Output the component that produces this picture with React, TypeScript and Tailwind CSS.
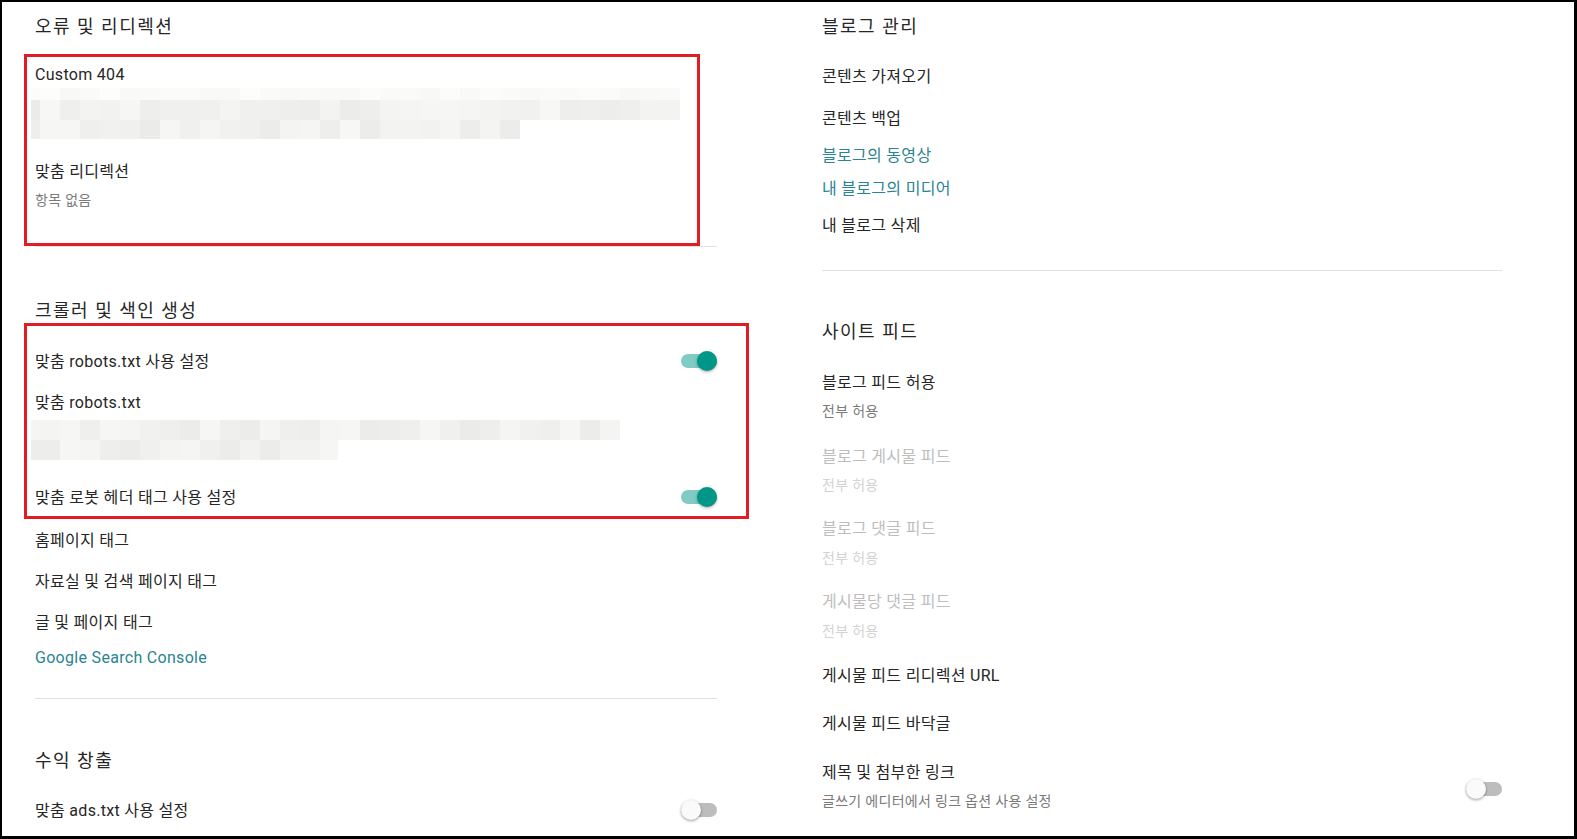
import React from "react";

type MRow = { y: number; h: number; end: number; light?: boolean };

function Mosaic({ rows, seed, height }: { rows: MRow[]; seed: number; height: number }) {
  let s = seed;
  const rnd = () => {
    s = (s * 9301 + 49297) % 233280;
    return s / 233280;
  };
  const width = Math.max(...rows.map((r) => r.end));
  const rects: React.ReactElement[] = [];
  rows.forEach((r, ri) => {
    let x = 0;
    let ci = 0;
    while (x < r.end) {
      const w = ci === 0 ? 9 : Math.min(20, r.end - x);
      const v = r.light ? Math.round(248 + rnd() * 5) : Math.round(235 + rnd() * 12);
      rects.push(
        <rect key={`${ri}-${ci}`} x={x} y={r.y} width={w} height={r.h} fill={`rgb(${v},${v},${v - 1})`} />
      );
      x += w;
      ci++;
    }
  });
  return (
    <svg width={width} height={height} className="block -ml-[4px]" viewBox={`0 0 ${width} ${height}`}>
      {rects}
    </svg>
  );
}

function Toggle({ on }: { on?: boolean }) {
  return (
    <div className="relative w-[36px] h-[20px] shrink-0">
      <div
        className={
          on
            ? "absolute left-0 right-0 top-[3px] h-[14px] rounded-full bg-[#80cbc4]"
            : "absolute left-0 right-0 top-[3px] h-[14px] rounded-full bg-[#bdbdbd]"
        }
      />
      <div
        className={
          on
            ? "absolute right-0 top-0 w-[20px] h-[20px] rounded-full bg-[#009688] shadow-[0_1px_3px_rgba(0,0,0,0.35)]"
            : "absolute left-0 top-0 w-[20px] h-[20px] rounded-full bg-[#fafafa] shadow-[0_1px_3px_rgba(0,0,0,0.4)]"
        }
      />
    </div>
  );
}

const H = "h-[36px] flex items-center text-[18px] tracking-[1.5px] text-[#262626]";
const T = "h-[24px] pt-[2px] flex items-center text-[16px] tracking-[0.3px] text-[#262626]";
const L = "h-[24px] pt-[2px] flex items-center text-[16px] tracking-[0.3px] text-[#2a8491]";
const S = "h-[20px] pt-[2px] flex items-center text-[14px] tracking-[0.3px] text-[#7a7a7a]";
const DT = "h-[24px] pt-[2px] flex items-center text-[16px] tracking-[0.3px] text-[#bdbdbd]";
const DS = "h-[20px] pt-[2px] flex items-center text-[14px] tracking-[0.3px] text-[#d3d3d3]";
const TR = "h-[32px] flex items-center justify-between text-[16px] tracking-[0.3px] text-[#262626]";

export default function App() {
  return (
    <div className="relative w-[1577px] h-[839px] overflow-hidden bg-white border-l-2 border-t-2 border-r-[3px] border-b-[3px] border-black font-[Roboto,'Noto_Sans_CJK_KR',sans-serif]">
      <div className="flex pl-[33px] pt-[6px]">
        {/* Left column */}
        <div className="w-[682px] flex flex-col">
          <h2 className={H}>오류 및 리디렉션</h2>
          <div className={`mt-[18px] ${T}`}>Custom 404</div>
          <div className="mt-[2px] h-[51px]">
            <Mosaic
              seed={17}
              height={51}
              rows={[
                { y: 0, h: 12, end: 649, light: true },
                { y: 12, h: 20, end: 649 },
                { y: 32, h: 19, end: 489 },
              ]}
            />
          </div>
          <div className={`mt-[20px] ${T}`}>맞춤 리디렉션</div>
          <div className={`mt-[6px] ${S}`}>항목 없음</div>
          <div className="mt-[37px] h-px bg-[#e0e0e0]" />
          <h2 className={`mt-[45px] ${H}`}>크롤러 및 색인 생성</h2>
          <div className={`mt-[17px] ${TR}`}>
            <span className="pt-[2px]">맞춤 robots.txt 사용 설정</span>
            <Toggle on />
          </div>
          <div className={`mt-[13px] ${T}`}>맞춤 robots.txt</div>
          <div className="mt-[6px] h-[41px]">
            <Mosaic
              seed={91}
              height={41}
              rows={[
                { y: 0, h: 20, end: 589 },
                { y: 20, h: 20, end: 307 },
              ]}
            />
          </div>
          <div className={`mt-[20px] ${TR}`}>
            <span className="pt-[2px]">맞춤 로봇 헤더 태그 사용 설정</span>
            <Toggle on />
          </div>
          <div className={`mt-[15px] ${T}`}>홈페이지 태그</div>
          <div className={`mt-[17px] ${T}`}>자료실 및 검색 페이지 태그</div>
          <div className={`mt-[17px] ${T}`}>글 및 페이지 태그</div>
          <div className={`mt-[11px] ${L}`}>Google Search Console</div>
          <div className="mt-[29px] h-px bg-[#e0e0e0]" />
          <h2 className={`mt-[43px] ${H}`}>수익 창출</h2>
          <div className={`mt-[16px] ${TR}`}>
            <span className="pt-[2px]">맞춤 ads.txt 사용 설정</span>
            <Toggle />
          </div>
        </div>

        {/* Right column */}
        <div className="ml-[105px] w-[680px] flex flex-col">
          <h2 className={H}>블로그 관리</h2>
          <div className={`mt-[20px] ${T}`}>콘텐츠 가져오기</div>
          <div className={`mt-[18px] ${T}`}>콘텐츠 백업</div>
          <div className={`mt-[13px] ${L}`}>블로그의 동영상</div>
          <div className={`mt-[9px] ${L}`}>내 블로그의 미디어</div>
          <div className={`mt-[13px] ${T}`}>내 블로그 삭제</div>
          <div className="mt-[33px] h-px bg-[#e0e0e0]" />
          <h2 className={`mt-[42px] ${H}`}>사이트 피드</h2>
          <div className={`mt-[21px] ${T}`}>블로그 피드 허용</div>
          <div className={`mt-[6px] ${S}`}>전부 허용</div>
          <div className={`mt-[24px] ${DT}`}>블로그 게시물 피드</div>
          <div className={`mt-[6px] ${DS}`}>전부 허용</div>
          <div className={`mt-[22px] ${DT}`}>블로그 댓글 피드</div>
          <div className={`mt-[7px] ${DS}`}>전부 허용</div>
          <div className={`mt-[22px] ${DT}`}>게시물당 댓글 피드</div>
          <div className={`mt-[7px] ${DS}`}>전부 허용</div>
          <div className={`mt-[23px] ${T}`}>게시물 피드 리디렉션 URL</div>
          <div className={`mt-[24px] ${T}`}>게시물 피드 바닥글</div>
          <div className="mt-[25px] flex items-center justify-between">
            <div className="flex flex-col">
              <div className={T}>제목 및 첨부한 링크</div>
              <div className={`mt-[6px] ${S}`}>글쓰기 에디터에서 링크 옵션 사용 설정</div>
            </div>
            <div className="mt-[8px]">
              <Toggle />
            </div>
          </div>
        </div>
      </div>

      {/* Annotation boxes */}
      <div className="absolute left-[22px] top-[52px] w-[676px] h-[192px] border-[3px] border-[#e31b23] pointer-events-none" />
      <div className="absolute left-[22px] top-[321px] w-[725px] h-[196px] border-[3px] border-[#e31b23] pointer-events-none" />
    </div>
  );
}
